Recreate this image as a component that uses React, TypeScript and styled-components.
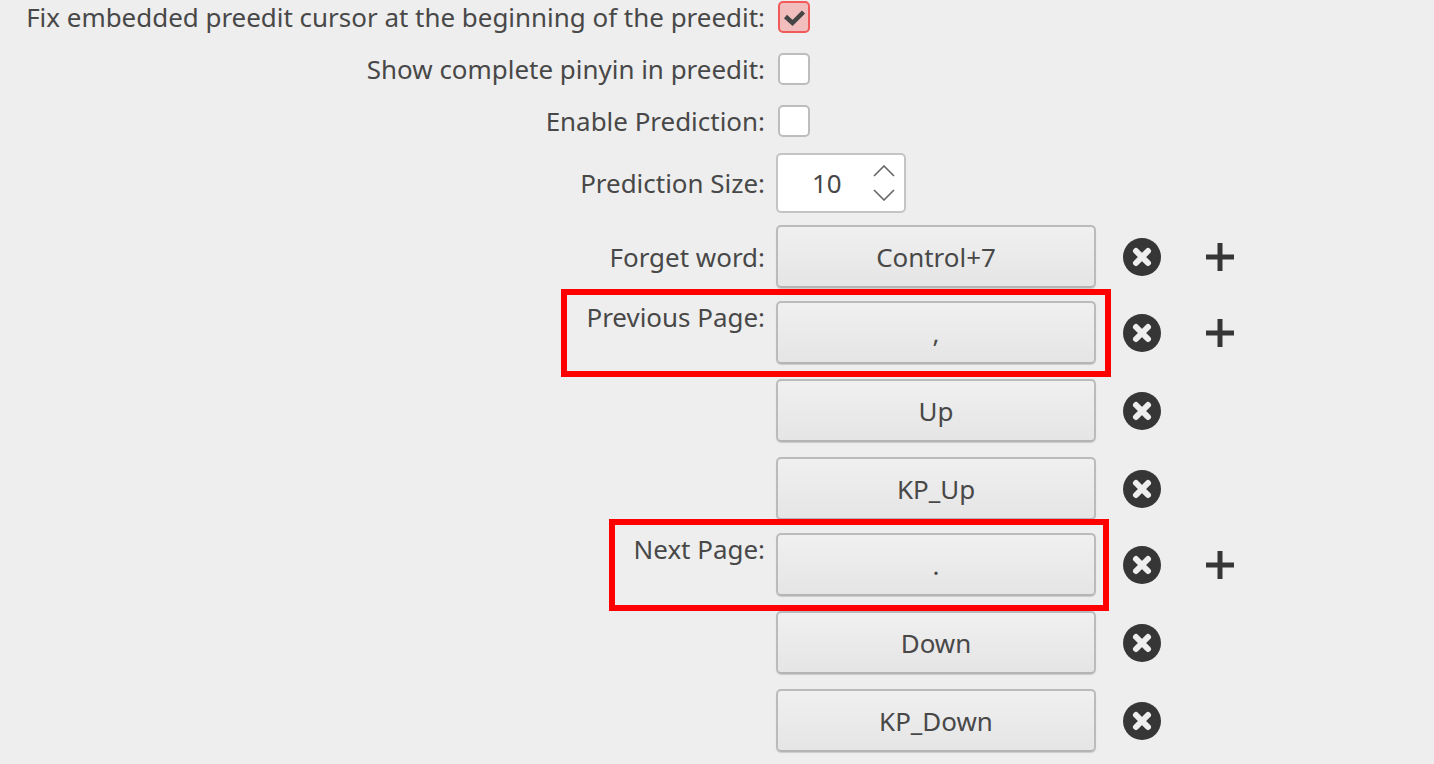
import React from 'react';
import styled, { createGlobalStyle } from 'styled-components';

const GlobalStyle = createGlobalStyle`
  html, body {
    margin: 0;
    padding: 0;
    background: #eeeeee;
    overflow: hidden;
  }
`;

const Page = styled.div`
  position: relative;
  width: 1434px;
  height: 764px;
  overflow: hidden;
  background: #eeeeee;
  color: #484848;
  font-family: 'Noto Sans', sans-serif;
  font-size: 25.94px;
`;

const Form = styled.div`
  display: grid;
  grid-template-columns: 765px 1fr;
  column-gap: 11px;
  padding-top: 1px;
`;

const Label = styled.div<{ $top?: boolean; $height: number; $pad?: number }>`
  height: ${p => p.$height}px;
  margin-bottom: ${p => p.$pad ?? 0}px;
  display: flex;
  justify-content: flex-end;
  align-items: ${p => (p.$top ? 'flex-start' : 'center')};
  line-height: ${p => (p.$top ? 32 : 34)}px;
  white-space: nowrap;
`;

const Field = styled.div<{ $height: number; $pad?: number }>`
  height: ${p => p.$height}px;
  margin-bottom: ${p => p.$pad ?? 0}px;
  display: flex;
  align-items: center;
`;

const Check = styled.div<{ $checked?: boolean }>`
  box-sizing: border-box;
  width: 32px;
  height: 32px;
  margin-left: 2px;
  border-radius: 5px;
  border: 2px solid ${p => (p.$checked ? '#f25a5a' : '#bdbdbd')};
  background: ${p => (p.$checked ? '#f2bdbd' : '#ffffff')};
  display: flex;
  align-items: center;
  justify-content: center;
`;

const Spin = styled.div`
  box-sizing: border-box;
  width: 130px;
  height: 60px;
  border-radius: 5px;
  border: 2px solid #c4c4c4;
  background: #ffffff;
  display: flex;
  align-items: center;
  justify-content: space-between;
  padding: 0 9px 0 34px;
`;

const Arrows = styled.svg`
  display: block;
`;

const KeyRow = styled.div`
  display: flex;
  align-items: center;
`;

const KeyButton = styled.div`
  box-sizing: border-box;
  width: 320px;
  height: 63px;
  padding-top: 1px;
  border: 2px solid #bbbbbb;
  border-bottom-color: #b4b4b4;
  border-radius: 5px;
  box-shadow: 0 1px 1px rgba(0, 0, 0, 0.15);
  background: linear-gradient(#f0f0f0, #e5e5e5);
  display: flex;
  align-items: center;
  justify-content: center;
  color: #484848;
`;

const RemoveIcon = styled.svg`
  display: block;
  margin-left: 26px;
`;

const AddIcon = styled.svg`
  display: block;
  margin-left: 44px;
`;

const Annotation = styled.div<{ $x: number; $y: number; $w: number; $h: number }>`
  position: absolute;
  box-sizing: border-box;
  left: ${p => p.$x}px;
  top: ${p => p.$y}px;
  width: ${p => p.$w}px;
  height: ${p => p.$h}px;
  border: 6px solid #ff0000;
`;

function Remove() {
  return (
    <RemoveIcon width="40" height="40" viewBox="0 0 40 40">
      <circle cx="20" cy="20" r="19" fill="#363636" />
      <path d="M14 14 L26 26 M26 14 L14 26" stroke="#eeeeee" strokeWidth="6" strokeLinecap="round" />
    </RemoveIcon>
  );
}

function Add() {
  return (
    <AddIcon width="28" height="28" viewBox="0 0 28 28">
      <path d="M0 14 H28 M14 0 V28" stroke="#363636" strokeWidth="5" />
    </AddIcon>
  );
}

type KeyProps = { text: string; add?: boolean };

function Key(props: KeyProps) {
  return (
    <KeyRow>
      <KeyButton>{props.text}</KeyButton>
      <Remove />
      {props.add && <Add />}
    </KeyRow>
  );
}

function Tick() {
  return (
    <svg width="24" height="20" viewBox="0 0 24 20">
      <path d="M3.5 9.5 L10.5 16 L21.5 5" fill="none" stroke="#454545" strokeWidth="4.5" />
    </svg>
  );
}

export default function App() {
  return (
    <Page>
      <GlobalStyle />
      <Form>
        <Label $height={32} $pad={20}>Fix embedded preedit cursor at the beginning of the preedit:</Label>
        <Field $height={32} $pad={20}><Check $checked><Tick /></Check></Field>

        <Label $height={32} $pad={20}>Show complete pinyin in preedit:</Label>
        <Field $height={32} $pad={20}><Check /></Field>

        <Label $height={32} $pad={16}>Enable Prediction:</Label>
        <Field $height={32} $pad={16}><Check /></Field>

        <Label $height={60} $pad={12}>Prediction Size:</Label>
        <Field $height={60} $pad={12}>
          <Spin>
            10
            <Arrows width="22" height="36" viewBox="0 0 22 36">
              <path d="M1 11 L11 1 L21 11 M1 25 L11 35 L21 25" fill="none" stroke="#666666" strokeWidth="1.6" />
            </Arrows>
          </Spin>
        </Field>

        <Label $height={63} $pad={13}>Forget word:</Label>
        <Field $height={63} $pad={13}><Key text="Control+7" add /></Field>

        <Label $top $height={63} $pad={15}>Previous Page:</Label>
        <Field $height={63} $pad={15}><Key text="," add /></Field>

        <Label $height={63} $pad={15} />
        <Field $height={63} $pad={15}><Key text="Up" /></Field>

        <Label $height={63} $pad={13} />
        <Field $height={63} $pad={13}><Key text="KP_Up" /></Field>

        <Label $top $height={63} $pad={15}>Next Page:</Label>
        <Field $height={63} $pad={15}><Key text="." add /></Field>

        <Label $height={63} $pad={15} />
        <Field $height={63} $pad={15}><Key text="Down" /></Field>

        <Label $height={63} />
        <Field $height={63}><Key text="KP_Down" /></Field>
      </Form>
      <Annotation $x={561} $y={289} $w={550} $h={88} />
      <Annotation $x={609} $y={519} $w={500} $h={92} />
    </Page>
  );
}
